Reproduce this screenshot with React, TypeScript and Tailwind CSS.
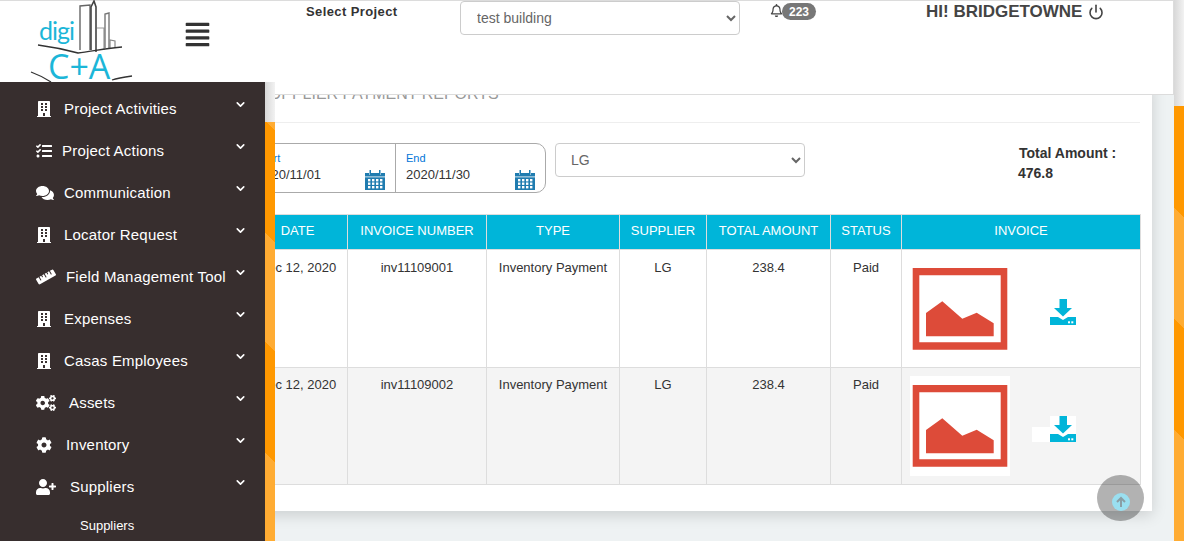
import { FaAlignJustify, FaBuilding, FaCog, FaCogs, FaComments, FaRegBell, FaRuler, FaTasks, FaUserPlus } from 'react-icons/fa';
import { ChevronDown, Power } from 'lucide-react';

const font = "font-['Liberation_Sans',Arial,sans-serif]";

const menu = [
  { label: 'Project Activities', Icon: FaBuilding, gap: 'ml-[28px]', size: 16 },
  { label: 'Project Actions', Icon: FaTasks, gap: 'ml-[26px]', size: 16 },
  { label: 'Communication', Icon: FaComments, gap: 'ml-[28px]', size: 18 },
  { label: 'Locator Request', Icon: FaBuilding, gap: 'ml-[28px]', size: 16 },
  { label: 'Field Management Tool', Icon: FaRuler, gap: 'ml-[30px]', size: 20 },
  { label: 'Expenses', Icon: FaBuilding, gap: 'ml-[28px]', size: 16 },
  { label: 'Casas Employees', Icon: FaBuilding, gap: 'ml-[28px]', size: 16 },
  { label: 'Assets', Icon: FaCogs, gap: 'ml-[33px]', size: 20 },
  { label: 'Inventory', Icon: FaCog, gap: 'ml-[30px]', size: 16 },
  { label: 'Suppliers', Icon: FaUserPlus, gap: 'ml-[34px]', size: 20 },
];

const rows = [
  { date: 'Dec 12, 2020', invoice: 'inv11109001', shaded: false },
  { date: 'Dec 12, 2020', invoice: 'inv11109002', shaded: true },
];

const Logo = () => (
  <svg width="115" height="82" viewBox="0 0 115 82" className="absolute left-[25px] -top-px">
    <g fill="none">
      <path d="M55 50V6L65 5V50" stroke="#666" strokeWidth="1.4" />
      <path d="M66 50V7L69 1L71 7V52" stroke="#444" strokeWidth="1.6" />
      <path d="M72 28H79V50" stroke="#999" strokeWidth="1.2" />
      <path d="M80 48V14L84 13V48" stroke="#777" strokeWidth="1.4" />
      <path d="M85 48V40L90 41V48" stroke="#888" strokeWidth="1.2" />
    </g>
    <path d="M13 45C28 47 42 50 53 53C68 51 84 48 97 47" fill="none" stroke="#333" strokeWidth="1.3" />
    <path d="M6 72C14 75 20 78 26 82" fill="none" stroke="#333" strokeWidth="1.3" />
    <path d="M87 80C93 78 100 77 107 76" fill="none" stroke="#333" strokeWidth="1.3" />
    <text x="14" y="40" fill="#1cb6d8" fontSize="25" fontFamily="Lato, sans-serif" textLength="36">digi</text>
    <text x="23" y="79" fill="#1cb6d8" fontSize="34" fontFamily="'Open Sans', sans-serif">C+A</text>
  </svg>
);

const CalendarIcon = () => (
  <svg width="20" height="20" viewBox="0 0 20 20" className="shrink-0">
    <path d="M0 3H4V5H6V3H14V5H16V3H20V20H0Z" fill="#1f7cb0" />
    <rect x="4.5" y="0" width="1.5" height="5" fill="#1f7cb0" />
    <rect x="14" y="0" width="1.5" height="5" fill="#1f7cb0" />
    {[3, 7, 11, 15].map((x) =>
      [9, 12.5, 16].map((y) => <rect key={`${x}-${y}`} x={x} y={y} width="2.4" height="2.4" fill="#fff" />)
    )}
    <rect x="0" y="6.5" width="20" height="0.8" fill="#fff" />
  </svg>
);

const PictureIcon = () => (
  <svg width="100" height="100" viewBox="0 0 100 100" className="shrink-0 bg-white">
    <path fillRule="evenodd" d="M2.7 9H97.3V90.7H2.7ZM9.3 16.3V83.3H90.7V16.3Z" fill="#dd4b39" />
    <path d="M16 54L32.3 42.3L52.3 59.7L66.7 53.7L83.7 64.3V77.3H16Z" fill="#dd4b39" />
  </svg>
);

const DownloadIcon = () => (
  <svg width="26" height="26" viewBox="0 0 26 26" className="shrink-0 bg-white">
    <path d="M9.5 0H17V9H22L13 17.5L4 9H9.5Z" fill="#00b5d9" />
    <path d="M0 18H8L13 21L18 18H26V26H0Z" fill="#00b5d9" />
    <rect x="18" y="22.3" width="2" height="2" fill="#fff" />
    <rect x="21.3" y="22.3" width="2" height="2" fill="#fff" />
  </svg>
);

const App = () => {
  return (
    <div className={`${font} flex h-[541px] w-[1184px] overflow-hidden bg-[#eef2f3]`}>
      <div className="flex w-[1174px] flex-col">
        <header className="relative z-10 h-[95px] shrink-0 border-t border-r border-b border-[#dcdcdc] bg-white">
          <Logo />
          <FaAlignJustify size={27} className="absolute left-[184px] top-[20px] text-[#333]" />
          <div className="flex items-start pl-[306px]">
            <span className="mt-[3px] w-[154px] text-[13px] leading-[15px] font-bold tracking-[0.4px] text-[#333]">Select Project</span>
            <select className="h-[34px] w-[280px] rounded border border-[#ccc] bg-white pl-[12px] text-[14px] text-[#666]">
              <option>test building</option>
            </select>
            <FaRegBell size={13} className="mt-[3px] -mr-px ml-[30px] text-[#444]" />
            <span className="mt-[2px] flex h-[17px] w-[34px] items-center justify-center rounded-full bg-[#777] text-[12px] font-bold text-white">223</span>
            <span className="ml-[110px] text-[17px] leading-[21px] font-bold text-[#444]">HI! BRIDGETOWNE</span>
            <Power size={16} strokeWidth={2.4} className="mt-[3px] ml-[6px] text-[#444]" />
          </div>
        </header>

        <div className="flex min-h-0 flex-1">
          <aside className="relative z-20 -mt-[13px] flex w-[275px] shrink-0">
            <nav className="w-[265px] bg-[#372e2e] pt-[6px] text-white">
              {menu.map(({ label, Icon, gap, size }) => (
                <div key={label} className="flex h-[42px] items-center pl-[36px]">
                  <span className="flex w-0 items-center">
                    <Icon size={size} className="shrink-0" />
                  </span>
                  <span className={`${gap} text-[15px] tracking-[0.2px] whitespace-nowrap`}>{label}</span>
                  <ChevronDown size={13} strokeWidth={3} className="absolute left-[234px] mt-[-9px]" />
                </div>
              ))}
              <div className="pt-[11px] pl-[80px] text-[13px] leading-[14px] text-white">Suppliers</div>
            </nav>
            <div className="flex w-[10px] flex-col">
              <div className="h-[40px] bg-gradient-to-r from-[#d8d8d8] to-[#f2f2f2]"></div>
              <div className="flex-1 bg-[repeating-linear-gradient(225deg,#ff9800_6px,#ff9800_85px,#ffac33_85px,#ffac33_162px)]"></div>
            </div>
          </aside>

          <main className="relative min-w-0 flex-1">
            <section className="-mt-[13px] -ml-[40px] mr-[22px] flex h-[429px] flex-col bg-white px-[12px] shadow-[0_4px_14px_rgba(0,0,0,0.15)]">
              <h2 className="border-b border-[#eee] pt-[2px] pb-[18px] pl-[12px] text-[16px] leading-[20px] text-[#999] uppercase">Supplier Payment Reports</h2>

              <div className="mt-[20px] flex h-[50px] items-start">
                <div className="-ml-[2px] flex h-[50px] w-[301px] rounded-[10px] border border-[#aaa]">
                  <div className="relative w-[150px] border-r border-[#aaa] pt-[8px] pl-[11px]">
                    <div className="text-[11px] leading-[12px] text-[#0275d8]">Start</div>
                    <div className="mt-[3px] text-[13px] leading-[16px] text-[#333]">2020/11/01</div>
                    <div className="absolute right-[10px] bottom-[2px]"><CalendarIcon /></div>
                  </div>
                  <div className="relative flex-1 pt-[8px] pl-[10px]">
                    <div className="text-[11px] leading-[12px] text-[#0275d8]">End</div>
                    <div className="mt-[3px] text-[13px] leading-[16px] text-[#333]">2020/11/30</div>
                    <div className="absolute right-[10px] bottom-[2px]"><CalendarIcon /></div>
                  </div>
                </div>
                <select className="ml-[9px] h-[34px] w-[250px] rounded border border-[#ccc] bg-white pl-[11px] text-[14px] text-[#666]">
                  <option>LG</option>
                </select>
                <div className="ml-[213px] text-[14px] leading-[20px] font-bold text-[#333]">
                  <div className="pl-px">Total Amount :</div>
                  <div>476.8</div>
                </div>
              </div>

              <table className="mt-[21px] w-[894px] table-fixed border-collapse text-center">
                <thead>
                  <tr className="h-[35px] bg-[#00b5d9] text-[13px] text-white">
                    <th className="w-[100px] border border-[#ddd] pb-[2px] font-normal">DATE</th>
                    <th className="w-[139px] border border-[#ddd] pb-[2px] font-normal">INVOICE NUMBER</th>
                    <th className="w-[133px] border border-[#ddd] pb-[2px] font-normal">TYPE</th>
                    <th className="w-[87px] border border-[#ddd] pb-[2px] font-normal">SUPPLIER</th>
                    <th className="w-[124px] border border-[#ddd] pb-[2px] font-normal">TOTAL AMOUNT</th>
                    <th className="w-[71px] border border-[#ddd] pb-[2px] font-normal">STATUS</th>
                    <th className="border border-[#ddd] pb-[2px] font-normal">INVOICE</th>
                  </tr>
                </thead>
                <tbody className="text-[13px] text-[#333]">
                  {rows.map((row) => {
                    const cell = `border border-[#ddd] align-top ${row.shaded ? 'pt-[7px]' : 'pt-[8px]'}`;
                    return (
                      <tr key={row.invoice} className={row.shaded ? 'h-[117px] bg-[#f4f4f4]' : 'h-[118px] bg-white'}>
                        <td className={cell}>{row.date}</td>
                        <td className={cell}>{row.invoice}</td>
                        <td className={cell}>Inventory Payment</td>
                        <td className={cell}>LG</td>
                        <td className={cell}>238.4</td>
                        <td className={cell}>Paid</td>
                        <td className="border border-[#ddd] pl-[8px] align-top">
                          <div className={`flex items-end ${row.shaded ? 'pt-[8px]' : 'pt-[9px]'}`}>
                            <PictureIcon />
                            <span className="mb-[34px] ml-[22px] h-[15px] w-[18px] bg-white"></span>
                            <span className="mb-[34px]"><DownloadIcon /></span>
                          </div>
                        </td>
                      </tr>
                    );
                  })}
                </tbody>
              </table>
            </section>
          </main>
        </div>
      </div>

      <div className="flex w-[10px] flex-col">
        <div className="h-[106px] bg-gradient-to-r from-[#d8d8d8] to-[#f2f2f2]"></div>
        <div className="flex-1 bg-[repeating-linear-gradient(225deg,#ff9800_0px,#ff9800_79px,#ffac33_79px,#ffac33_157px)]"></div>
      </div>

      {/* back to top */}
      <button className="absolute top-[475px] left-[1097px] z-30 flex h-[46px] w-[47px] items-center justify-center rounded-full bg-[rgba(0,0,0,0.3)] pt-[7px]">
        <span className="flex h-[18px] w-[18px] items-center justify-center rounded-full bg-[#9adff0]">
          <svg width="12" height="12" viewBox="0 0 12 12" fill="none" stroke="#8a9ea5" strokeWidth="2">
            <path d="M6 11V2M2 6L6 2L10 6" />
          </svg>
        </span>
      </button>
    </div>
  );
};

export default App;
